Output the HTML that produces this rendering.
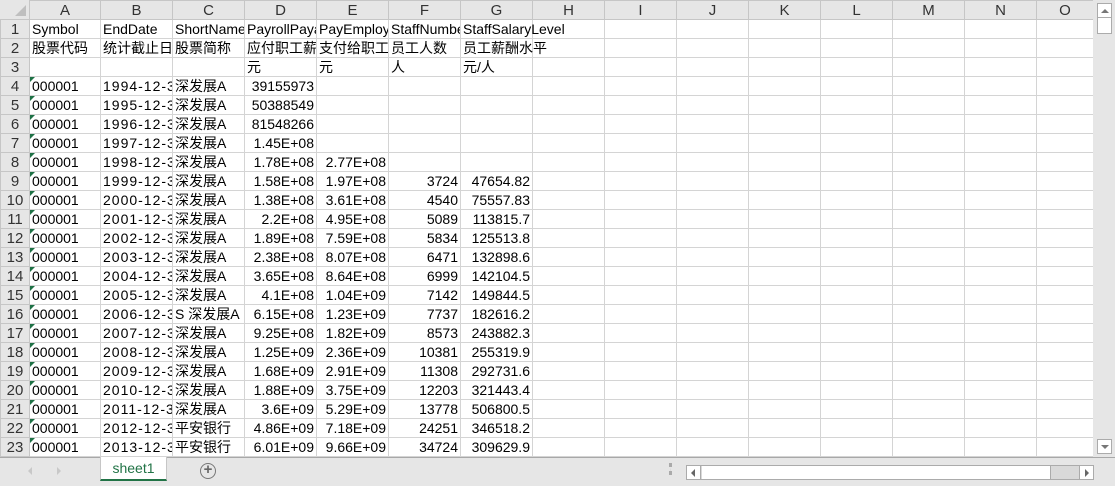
<!DOCTYPE html>
<html><head><meta charset="utf-8"><style>
*{margin:0;padding:0;box-sizing:border-box}
body{width:1115px;height:486px;overflow:hidden;background:#fff;font-family:"Liberation Sans","Noto Sans CJK SC",sans-serif;font-size:14px;color:#000;position:relative}
table{border-collapse:collapse;table-layout:fixed;position:absolute;left:0;top:0;width:1093px}
td{height:19px;border:1px solid #d4d4d4;white-space:nowrap;overflow:hidden;padding:0 2px;line-height:17px;position:relative}
tr.h td{background:#e6e6e6;text-align:center;color:#333;border-color:#c6c6c6;height:19px;font-size:15px}
td.r{background:#e6e6e6;text-align:center;color:#333;border-color:#c6c6c6;padding:0;font-size:15px}
td.n{text-align:right}
td.d{letter-spacing:1px}
td.t::before{content:"";position:absolute;left:0;top:0;border-top:5px solid #1e7145;border-right:5px solid transparent}
td.v{overflow:visible}
.corner{position:absolute;left:0;top:0;width:29px;height:19px;background:#e6e6e6}
.corner::after{content:"";position:absolute;right:3px;bottom:3px;border-left:11px solid transparent;border-bottom:11px solid #bfbfbf}
.vs{position:absolute;left:1093px;top:0;width:22px;height:458px;background:#e6e6e6}
.bot{position:absolute;left:0;top:457px;width:1115px;height:29px;background:#e6e6e6;border-top:1px solid #a8a8a8}
</style></head><body>
<table>
<colgroup><col style="width:29px"><col style="width:71px"><col style="width:72px"><col style="width:72px"><col style="width:72px"><col style="width:72px"><col style="width:72px"><col style="width:72px"><col style="width:72px"><col style="width:72px"><col style="width:72px"><col style="width:72px"><col style="width:72px"><col style="width:72px"><col style="width:72px"><col style="width:57px"></colgroup>
<tr class="h"><td></td><td>A</td><td>B</td><td>C</td><td>D</td><td>E</td><td>F</td><td>G</td><td>H</td><td>I</td><td>J</td><td>K</td><td>L</td><td>M</td><td>N</td><td>O</td></tr>
<tr><td class="r">1</td><td>Symbol</td><td>EndDate</td><td>ShortName</td><td>PayrollPayable</td><td>PayEmployee</td><td>StaffNumber</td><td class="v">StaffSalaryLevel</td><td></td><td></td><td></td><td></td><td></td><td></td><td></td><td></td></tr>
<tr><td class="r">2</td><td>股票代码</td><td>统计截止日期</td><td>股票简称</td><td>应付职工薪酬</td><td>支付给职工现金</td><td>员工人数</td><td class="v">员工薪酬水平</td><td></td><td></td><td></td><td></td><td></td><td></td><td></td><td></td></tr>
<tr><td class="r">3</td><td></td><td></td><td></td><td>元</td><td>元</td><td>人</td><td>元/人</td><td></td><td></td><td></td><td></td><td></td><td></td><td></td><td></td></tr>
<tr><td class="r">4</td><td class="t">000001</td><td class="d">1994-12-31</td><td>深发展A</td><td class="n">39155973</td><td></td><td></td><td></td><td></td><td></td><td></td><td></td><td></td><td></td><td></td><td></td></tr>
<tr><td class="r">5</td><td class="t">000001</td><td class="d">1995-12-31</td><td>深发展A</td><td class="n">50388549</td><td></td><td></td><td></td><td></td><td></td><td></td><td></td><td></td><td></td><td></td><td></td></tr>
<tr><td class="r">6</td><td class="t">000001</td><td class="d">1996-12-31</td><td>深发展A</td><td class="n">81548266</td><td></td><td></td><td></td><td></td><td></td><td></td><td></td><td></td><td></td><td></td><td></td></tr>
<tr><td class="r">7</td><td class="t">000001</td><td class="d">1997-12-31</td><td>深发展A</td><td class="n">1.45E+08</td><td></td><td></td><td></td><td></td><td></td><td></td><td></td><td></td><td></td><td></td><td></td></tr>
<tr><td class="r">8</td><td class="t">000001</td><td class="d">1998-12-31</td><td>深发展A</td><td class="n">1.78E+08</td><td class="n">2.77E+08</td><td></td><td></td><td></td><td></td><td></td><td></td><td></td><td></td><td></td><td></td></tr>
<tr><td class="r">9</td><td class="t">000001</td><td class="d">1999-12-31</td><td>深发展A</td><td class="n">1.58E+08</td><td class="n">1.97E+08</td><td class="n">3724</td><td class="n">47654.82</td><td></td><td></td><td></td><td></td><td></td><td></td><td></td><td></td></tr>
<tr><td class="r">10</td><td class="t">000001</td><td class="d">2000-12-31</td><td>深发展A</td><td class="n">1.38E+08</td><td class="n">3.61E+08</td><td class="n">4540</td><td class="n">75557.83</td><td></td><td></td><td></td><td></td><td></td><td></td><td></td><td></td></tr>
<tr><td class="r">11</td><td class="t">000001</td><td class="d">2001-12-31</td><td>深发展A</td><td class="n">2.2E+08</td><td class="n">4.95E+08</td><td class="n">5089</td><td class="n">113815.7</td><td></td><td></td><td></td><td></td><td></td><td></td><td></td><td></td></tr>
<tr><td class="r">12</td><td class="t">000001</td><td class="d">2002-12-31</td><td>深发展A</td><td class="n">1.89E+08</td><td class="n">7.59E+08</td><td class="n">5834</td><td class="n">125513.8</td><td></td><td></td><td></td><td></td><td></td><td></td><td></td><td></td></tr>
<tr><td class="r">13</td><td class="t">000001</td><td class="d">2003-12-31</td><td>深发展A</td><td class="n">2.38E+08</td><td class="n">8.07E+08</td><td class="n">6471</td><td class="n">132898.6</td><td></td><td></td><td></td><td></td><td></td><td></td><td></td><td></td></tr>
<tr><td class="r">14</td><td class="t">000001</td><td class="d">2004-12-31</td><td>深发展A</td><td class="n">3.65E+08</td><td class="n">8.64E+08</td><td class="n">6999</td><td class="n">142104.5</td><td></td><td></td><td></td><td></td><td></td><td></td><td></td><td></td></tr>
<tr><td class="r">15</td><td class="t">000001</td><td class="d">2005-12-31</td><td>深发展A</td><td class="n">4.1E+08</td><td class="n">1.04E+09</td><td class="n">7142</td><td class="n">149844.5</td><td></td><td></td><td></td><td></td><td></td><td></td><td></td><td></td></tr>
<tr><td class="r">16</td><td class="t">000001</td><td class="d">2006-12-31</td><td>S 深发展A</td><td class="n">6.15E+08</td><td class="n">1.23E+09</td><td class="n">7737</td><td class="n">182616.2</td><td></td><td></td><td></td><td></td><td></td><td></td><td></td><td></td></tr>
<tr><td class="r">17</td><td class="t">000001</td><td class="d">2007-12-31</td><td>深发展A</td><td class="n">9.25E+08</td><td class="n">1.82E+09</td><td class="n">8573</td><td class="n">243882.3</td><td></td><td></td><td></td><td></td><td></td><td></td><td></td><td></td></tr>
<tr><td class="r">18</td><td class="t">000001</td><td class="d">2008-12-31</td><td>深发展A</td><td class="n">1.25E+09</td><td class="n">2.36E+09</td><td class="n">10381</td><td class="n">255319.9</td><td></td><td></td><td></td><td></td><td></td><td></td><td></td><td></td></tr>
<tr><td class="r">19</td><td class="t">000001</td><td class="d">2009-12-31</td><td>深发展A</td><td class="n">1.68E+09</td><td class="n">2.91E+09</td><td class="n">11308</td><td class="n">292731.6</td><td></td><td></td><td></td><td></td><td></td><td></td><td></td><td></td></tr>
<tr><td class="r">20</td><td class="t">000001</td><td class="d">2010-12-31</td><td>深发展A</td><td class="n">1.88E+09</td><td class="n">3.75E+09</td><td class="n">12203</td><td class="n">321443.4</td><td></td><td></td><td></td><td></td><td></td><td></td><td></td><td></td></tr>
<tr><td class="r">21</td><td class="t">000001</td><td class="d">2011-12-31</td><td>深发展A</td><td class="n">3.6E+09</td><td class="n">5.29E+09</td><td class="n">13778</td><td class="n">506800.5</td><td></td><td></td><td></td><td></td><td></td><td></td><td></td><td></td></tr>
<tr><td class="r">22</td><td class="t">000001</td><td class="d">2012-12-31</td><td>平安银行</td><td class="n">4.86E+09</td><td class="n">7.18E+09</td><td class="n">24251</td><td class="n">346518.2</td><td></td><td></td><td></td><td></td><td></td><td></td><td></td><td></td></tr>
<tr><td class="r">23</td><td class="t">000001</td><td class="d">2013-12-31</td><td>平安银行</td><td class="n">6.01E+09</td><td class="n">9.66E+09</td><td class="n">34724</td><td class="n">309629.9</td><td></td><td></td><td></td><td></td><td></td><td></td><td></td><td></td></tr>
<tr><td class="r"></td><td class="t"></td><td></td><td></td><td></td><td></td><td></td><td></td><td></td><td></td><td></td><td></td><td></td><td></td><td></td><td></td></tr>
</table>
<div class="corner"></div>
<div class="vs">
 <div style="position:absolute;left:4px;top:3px;width:15px;height:15px;background:#fff;border:1px solid #ababab"><div style="position:absolute;left:3px;top:5px;border-left:4px solid transparent;border-right:4px solid transparent;border-bottom:4px solid #777"></div></div>
 <div style="position:absolute;left:4px;top:17px;width:15px;height:17px;background:#fff;border:1px solid #ababab"></div>
 <div style="position:absolute;left:4px;top:439px;width:15px;height:15px;background:#fff;border:1px solid #ababab"><div style="position:absolute;left:3px;top:5px;border-left:4px solid transparent;border-right:4px solid transparent;border-top:4px solid #777"></div></div>
</div>
<div class="bot">
 <div style="position:absolute;left:28px;top:9px;border-top:4px solid transparent;border-bottom:4px solid transparent;border-right:4px solid #c8c8c8"></div>
 <div style="position:absolute;left:57px;top:9px;border-top:4px solid transparent;border-bottom:4px solid transparent;border-left:4px solid #c8c8c8"></div>
 <div style="position:absolute;left:100px;top:-1px;width:67px;height:24px;background:#fff;border:1px solid #c6c6c6;border-top:none;border-bottom:2px solid #217346;color:#217346;font-size:14px;text-align:center;line-height:22px">sheet1</div>
 <div style="position:absolute;left:200px;top:5px;width:16px;height:16px;border:1.5px solid #777;border-radius:50%;color:#666;font-size:15px;line-height:12px;text-align:center;font-weight:bold">+</div>
 <div style="position:absolute;left:669px;top:5px;width:3px;height:12px;border-left:3px dotted #aaa"></div>
 <div style="position:absolute;left:686px;top:7px;width:408px;height:15px;background:#d9d9d9;border:1px solid #ababab"></div>
 <div style="position:absolute;left:687px;top:8px;width:14px;height:13px;background:#fff;border-right:1px solid #ababab"><div style="position:absolute;left:4px;top:3px;border-top:4px solid transparent;border-bottom:4px solid transparent;border-right:4px solid #666"></div></div>
 <div style="position:absolute;left:702px;top:8px;width:349px;height:13px;background:#fff;border-right:1px solid #ababab"></div>
 <div style="position:absolute;left:1079px;top:8px;width:14px;height:13px;background:#fff;border-left:1px solid #ababab"><div style="position:absolute;left:5px;top:3px;border-top:4px solid transparent;border-bottom:4px solid transparent;border-left:4px solid #666"></div></div>
</div>
</body></html>
